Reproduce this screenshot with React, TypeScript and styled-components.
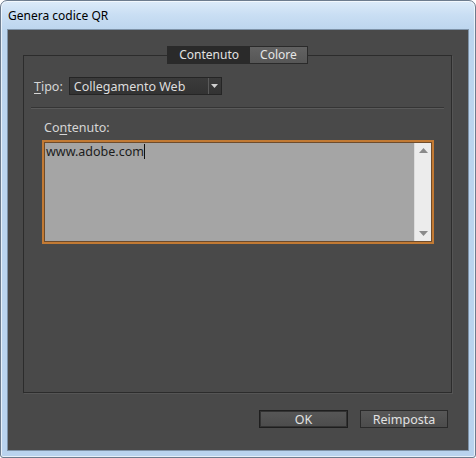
import React from "react";
import styled, { createGlobalStyle } from "styled-components";

const Global = createGlobalStyle`
  html, body { margin: 0; padding: 0; background: #ffffff; }
  * { box-sizing: border-box; }
`;

const Frame = styled.div`
  width: 476px;
  height: 458px;
  border: 1px solid #6d7c8e;
  border-radius: 7px 7px 3px 3px;
  background: linear-gradient(180deg, #dcebf9 0px, #c9def3 14px, #bcd5ee 30px, #b9d3ee 100%);
  display: flex;
  flex-direction: column;
  padding: 0 6px 6px 6px;
  overflow: hidden;
  box-shadow: inset 0 0 0 1px rgba(255,255,255,0.65);
`;

const TitleBar = styled.div`
  height: 28px;
  display: flex;
  align-items: center;
  padding-left: 1px;
  font-family: "Noto Sans", "Open Sans", sans-serif;
  font-size: 12px;
  color: #000;
`;

const Client = styled.div`
  flex: 1;
  background: #494949;
  border: 1px solid #7f93a8;
  display: flex;
  flex-direction: column;
  padding: 25px 16px 0 15px;
  font-family: "Noto Sans", "Open Sans", sans-serif;
  font-size: 12px;
  color: #d9d9d9;
`;

const Group = styled.div`
  height: 338px;
  border: 1px solid #2c2c2c;
  box-shadow: 1px 1px 0 #555;
  display: flex;
  flex-direction: column;
  padding: 0 7px 0 7px;
`;

const TabRow = styled.div`
  display: flex;
  justify-content: center;
  margin-top: -10px;
  padding-left: 0;
`;

const Tab = styled.div<{ $active?: boolean }>`
  height: 18px;
  padding: ${(p) => (p.$active ? "0 10px 0 11px" : "0 10px 0 10px")};
  display: flex;
  align-items: center;
  background: ${(p) => (p.$active ? "#2a2a2a" : "linear-gradient(#626262, #565656)")};
  border: 1px solid #2a2a2a;
  border-left-width: ${(p) => (p.$active ? "1px" : "0")};
  color: ${(p) => (p.$active ? "#e2e2e2" : "#e6e6e6")};
  font-size: 12px;
  line-height: 1;
`;

const TypeRow = styled.div`
  display: flex;
  align-items: center;
  gap: 6px;
  margin-top: 13px;
  padding-left: 3px;
`;

const Label = styled.span`
  color: #d6d6d6;
  font-size: 12.5px;
  u { text-underline-offset: 2px; }
`;

const Select = styled.div`
  width: 153px;
  height: 18px;
  background: linear-gradient(#3b3b3b, #333333);
  border: 1px solid #252525;
  display: flex;
  align-items: center;
  color: #dddddd;
  font-size: 12.5px;
`;

const SelectText = styled.span`
  flex: 1;
  padding-left: 4px;
  white-space: nowrap;
`;

const SelectArrow = styled.span`
  width: 13px;
  height: 100%;
  border-left: 1px solid #5a5a5a;
  display: flex;
  align-items: center;
  justify-content: center;
`;

const Divider = styled.div`
  height: 2px;
  margin-top: 12px;
  border-top: 1px solid #353535;
  border-bottom: 1px solid #5a5a5a;
`;

const FieldLabel = styled(Label)`
  margin: 10px 0 0 13px;
`;

const TextBox = styled.div`
  margin: 4px 10px 0 11px;
  height: 104px;
  border: 2px solid #c27a34;
  box-shadow: inset 0 0 0 1px #6e4c2c;
  background: #a5a5a5;
  display: flex;
`;

const TextValue = styled.div`
  flex: 1;
  padding: 2px 2px;
  color: #1c1c1c;
  font-size: 12.5px;
  line-height: 16px;
`;

const Caret = styled.span`
  display: inline-block;
  width: 1px;
  height: 15px;
  background: #111;
  vertical-align: -3px;
`;

const ScrollBar = styled.div`
  width: 17px;
  background: #ececec;
  border-left: 1px solid #dcdcdc;
  margin: 1px 1px 1px 0;
  display: flex;
  flex-direction: column;
  justify-content: space-between;
  align-items: center;
  padding: 5px 0 5px;
`;

const Buttons = styled.div`
  display: flex;
  justify-content: flex-end;
  gap: 12px;
  margin-top: 17px;
  padding-right: 4px;
`;

const Button = styled.div<{ $default?: boolean }>`
  width: ${(p) => (p.$default ? "89px" : "88px")};
  height: 18px;
  border: 1px solid ${(p) => (p.$default ? "#1e1e1e" : "#2a2a2a")};
  box-shadow: ${(p) => (p.$default ? "inset 0 0 0 1px #333" : "none")};
  background: linear-gradient(#575757, #4c4c4c);
  color: #e2e2e2;
  font-size: 12.5px;
  display: flex;
  align-items: center;
  justify-content: center;
`;

const Tri = ({ up }: { up?: boolean }) => (
  <svg width="9" height="5" viewBox="0 0 9 5">
    <polygon points={up ? "4.5,0 9,5 0,5" : "0,0 9,0 4.5,5"} fill="#8a8a8a" />
  </svg>
);

export default function App() {
  return (
    <>
      <Global />
      <Frame>
        <TitleBar>Genera codice QR</TitleBar>
        <Client>
          <Group>
            <TabRow>
              <Tab $active>Contenuto</Tab>
              <Tab>Colore</Tab>
            </TabRow>
            <TypeRow>
              <Label>
                <u>T</u>ipo:
              </Label>
              <Select>
                <SelectText>Collegamento Web</SelectText>
                <SelectArrow>
                  <svg width="7" height="4" viewBox="0 0 7 4">
                    <polygon points="0,0 7,0 3.5,4" fill="#d0d0d0" />
                  </svg>
                </SelectArrow>
              </Select>
            </TypeRow>
            <Divider />
            <FieldLabel>
              Co<u>n</u>tenuto:
            </FieldLabel>
            <TextBox>
              <TextValue>
                www.adobe.com<Caret />
              </TextValue>
              <ScrollBar>
                <Tri up />
                <Tri />
              </ScrollBar>
            </TextBox>
          </Group>
          <Buttons>
            <Button $default>OK</Button>
            <Button>Reimposta</Button>
          </Buttons>
        </Client>
      </Frame>
    </>
  );
}
